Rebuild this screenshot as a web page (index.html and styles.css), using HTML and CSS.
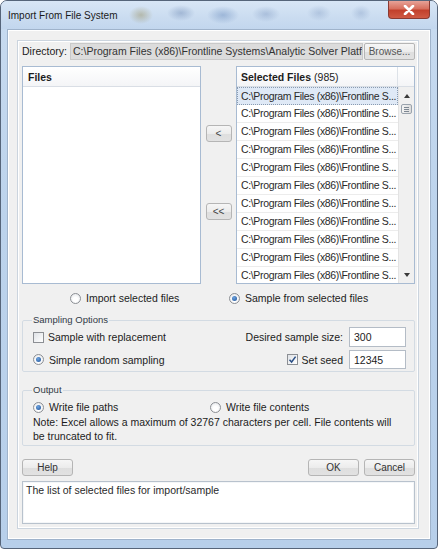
FILE: index.html
```html
<!DOCTYPE html>
<html>
<head>
<meta charset="utf-8">
<title>Import From File System</title>
<link rel="stylesheet" href="styles.css">
</head>
<body>
<div class="window">
  <div class="titlebar">
    <span class="title">Import From File System</span>
    <span class="close"><svg width="12" height="10" viewBox="0 0 12 10"><path d="M2 1 L10 9 M10 1 L2 9" stroke="#fff" stroke-width="2.6" stroke-linecap="round"/></svg></span>
  </div>
  <div class="client">
    <div class="panel">
      <div class="dir-row">
        <span class="dir-label">Directory:</span>
        <div class="dir-input"><span class="dir-text">C:\Program Files (x86)\Frontline Systems\Analytic Solver Platform</span></div>
        <div class="btn browse">Browse...</div>
      </div>

      <div class="lists">
        <div class="list files">
          <div class="list-head"><b>Files</b></div>
        </div>
        <div class="move-col">
          <div class="btn move move-one">&lt;</div>
          <div class="btn move move-all">&lt;&lt;</div>
        </div>
        <div class="list selected">
          <div class="list-head">
            <span class="head-cell"><b>Selected Files</b> (985)</span>
            <span class="head-corner"></span>
          </div>
          <div class="list-body">
            <div class="rows">
              <div class="row current">C:\Program Files (x86)\Frontline S...</div>
              <div class="row">C:\Program Files (x86)\Frontline S...</div>
              <div class="row">C:\Program Files (x86)\Frontline S...</div>
              <div class="row">C:\Program Files (x86)\Frontline S...</div>
              <div class="row">C:\Program Files (x86)\Frontline S...</div>
              <div class="row">C:\Program Files (x86)\Frontline S...</div>
              <div class="row">C:\Program Files (x86)\Frontline S...</div>
              <div class="row">C:\Program Files (x86)\Frontline S...</div>
              <div class="row">C:\Program Files (x86)\Frontline S...</div>
              <div class="row">C:\Program Files (x86)\Frontline S...</div>
              <div class="row">C:\Program Files (x86)\Frontline S...</div>
            </div>
            <div class="scrollbar">
              <span class="arrow"><span class="tri-up"></span></span>
              <span class="thumb"><span class="grip"></span></span>
              <span class="track"></span>
              <span class="arrow"><span class="tri-down"></span></span>
            </div>
          </div>
        </div>
      </div>

      <div class="mode-row">
        <span class="opt mode-first"><span class="radio"></span>Import selected files</span>
        <span class="opt"><span class="radio on"></span>Sample from selected files</span>
      </div>

      <fieldset class="group sampling">
        <legend>Sampling Options</legend>
        <div class="grow">
          <span class="opt"><span class="check"></span>Sample with replacement</span>
          <span class="right"><span class="lbl">Desired sample size:</span><span class="field">300</span></span>
        </div>
        <div class="grow">
          <span class="opt"><span class="radio on"></span>Simple random sampling</span>
          <span class="right"><span class="opt"><span class="check on"><svg width="9" height="9" viewBox="0 0 9 9"><path d="M1.5 4.8 L3.6 7 L7.6 1.6" fill="none" stroke="#2b4f86" stroke-width="1.5"/></svg></span>Set seed</span><span class="field">12345</span></span>
        </div>
      </fieldset>

      <fieldset class="group output">
        <legend>Output</legend>
        <div class="out-row">
          <span class="opt out-first"><span class="radio on"></span>Write file paths</span>
          <span class="opt"><span class="radio"></span>Write file contents</span>
        </div>
        <p class="note">Note: Excel allows a maximum of 32767 characters per cell. File contents will<br>be truncated to fit.</p>
      </fieldset>

      <div class="btn-row">
        <div class="btn act">Help</div>
        <span class="spacer"></span>
        <div class="btn act">OK</div>
        <div class="btn act">Cancel</div>
      </div>

      <div class="desc">The list of selected files for import/sample</div>
    </div>
  </div>
</div>
</body>
</html>
```

FILE: styles.css
```css
* { box-sizing: border-box; }

html, body {
  margin: 0;
  padding: 0;
  background: #ffffff;
}

body {
  font-family: "Liberation Sans", Arial, sans-serif;
  font-size: 10.5px;
  color: #1c1c1c;
}

.window {
  width: 438px;
  height: 549px;
  border: 1px solid #56657a;
  border-radius: 7px 7px 4px 4px;
  background: linear-gradient(180deg, #c8dbf0 0%, #bcd3ec 40%, #b7cfea 100%);
  padding: 0 6px 8px 6px;
  display: flex;
  flex-direction: column;
  overflow: hidden;
}

.titlebar {
  height: 28px;
  display: flex;
  align-items: flex-start;
  margin: 0 -6px;
  padding: 0 7px 0 7px;
  background:
    radial-gradient(ellipse 12px 9px at 140px 14px, rgba(150,140,90,0.45), transparent),
    radial-gradient(ellipse 14px 8px at 180px 12px, rgba(80,110,160,0.35), transparent),
    radial-gradient(ellipse 16px 9px at 222px 14px, rgba(70,110,170,0.35), transparent),
    radial-gradient(ellipse 14px 8px at 265px 13px, rgba(90,120,170,0.3), transparent),
    radial-gradient(ellipse 12px 8px at 318px 12px, rgba(90,120,170,0.25), transparent),
    radial-gradient(ellipse 10px 8px at 360px 12px, rgba(90,120,170,0.25), transparent),
    linear-gradient(180deg, #d8e6f6 0%, #cadcf0 60%, #c2d6ee 100%);
}

.title {
  font-size: 10px;
  color: #1a1a1a;
  padding-top: 9px;
  flex: 1;
}

.close {
  width: 42px;
  height: 18px;
  margin-top: 0;
  border: 1px solid #8a3a32;
  border-top: none;
  border-radius: 0 0 4px 4px;
  background: linear-gradient(180deg, #e7a298 0%, #d7705f 45%, #c2402c 55%, #cf5a44 100%);
  display: flex;
  align-items: center;
  justify-content: center;
}

.client {
  flex: 1;
  background: #f0f0f0;
  border: 1px solid #9fb3cb;
  box-shadow: inset 0 0 0 1px #ffffff;
  padding: 10px 11px 10px 9px;
  display: flex;
}

.panel {
  flex: 1;
  border: 1px solid #cbd4de;
  box-shadow: inset 0 0 0 1px #ffffff;
  padding: 2px 3px 2px 4px;
  display: flex;
  flex-direction: column;
}

/* Directory row */
.dir-row {
  height: 17px;
  display: flex;
  align-items: stretch;
}

.dir-label {
  width: 48px;
  line-height: 17px;
  white-space: nowrap;
}

.dir-input {
  width: 293px;
  background: #dcdcdc;
  border: 1px solid #c9c9c9;
  line-height: 15px;
  padding: 0 2px;
  white-space: nowrap;
  overflow: hidden;
  color: #333;
}

.btn {
  border: 1px solid #b5b5b5;
  border-radius: 3px;
  background: linear-gradient(180deg, #f6f6f6 0%, #ececec 50%, #dedede 51%, #e2e2e2 100%);
  color: #2a2a2a;
  display: flex;
  align-items: center;
  justify-content: center;
  font-size: 10px;
}

.browse {
  width: 51px;
  margin-left: 1px;
  border-radius: 2px;
  color: #555;
}

/* Lists */
.lists {
  margin-top: 6px;
  height: 218px;
  display: flex;
}

.list {
  width: 179px;
  border: 1px solid #a8bbd2;
  background: #ffffff;
  display: flex;
  flex-direction: column;
  overflow: hidden;
}

.list-head {
  height: 20px;
  border-bottom: 1px solid #d9dee5;
  background: linear-gradient(180deg, #ffffff, #f4f5f7);
  display: flex;
  align-items: center;
  flex-shrink: 0;
}

.files .list-head {
  padding-left: 5px;
}

.head-cell {
  flex: 1;
  padding-left: 4px;
  height: 100%;
  display: flex;
  align-items: center;
  gap: 3px;
}

.head-corner {
  width: 17px;
  height: 100%;
  border-left: 1px solid #dde2e8;
}

.move-col {
  width: 35px;
  display: flex;
  flex-direction: column;
  align-items: center;
}

.move {
  width: 26px;
  height: 17px;
  color: #444;
  font-size: 10px;
}

.move-one { margin-top: 59px; }
.move-all { margin-top: 61px; }

.list-body {
  flex: 1;
  display: flex;
  min-height: 0;
}

.rows {
  flex: 1;
  overflow: hidden;
}

.row {
  height: 18px;
  line-height: 17px;
  border-bottom: 1px solid #ececec;
  padding-left: 4px;
  white-space: nowrap;
  overflow: hidden;
  color: #2a2a2a;
  letter-spacing: -0.35px;
}

.row.current {
  background: #dfe9f6;
  border: 1px dotted #8a9bb0;
  padding-left: 3px;
  line-height: 16px;
}

.scrollbar {
  width: 16px;
  background: #f0f0f0;
  border-left: 1px solid #e3e3e3;
  display: flex;
  flex-direction: column;
  align-items: center;
}

.arrow {
  height: 17px;
  width: 100%;
  display: flex;
  align-items: center;
  justify-content: center;
}

.tri-up {
  width: 0; height: 0;
  border-left: 3.5px solid transparent;
  border-right: 3.5px solid transparent;
  border-bottom: 4px solid #3a3a3a;
}

.tri-down {
  width: 0; height: 0;
  border-left: 3.5px solid transparent;
  border-right: 3.5px solid transparent;
  border-top: 4px solid #3a3a3a;
}

.thumb {
  width: 11px;
  height: 10px;
  border: 1px solid #9aa3ad;
  border-radius: 2px;
  background: linear-gradient(90deg, #f4f4f4, #dcdcdc);
  display: flex;
  align-items: center;
  justify-content: center;
}

.grip {
  width: 5px;
  height: 5px;
  border-top: 1px solid #7d8792;
  border-bottom: 1px solid #7d8792;
  background: linear-gradient(180deg, transparent 40%, #7d8792 40%, #7d8792 60%, transparent 60%);
}

.track { flex: 1; }

/* Options */
.opt {
  display: inline-flex;
  align-items: center;
  white-space: nowrap;
}

.radio {
  width: 11px;
  height: 11px;
  border-radius: 50%;
  border: 1px solid #8c8f94;
  background: radial-gradient(circle at 50% 60%, #ffffff 30%, #dfe2e6 100%);
  margin-right: 5px;
  flex-shrink: 0;
  display: inline-flex;
  align-items: center;
  justify-content: center;
}

.radio.on::after {
  content: "";
  width: 5px;
  height: 5px;
  border-radius: 50%;
  background: radial-gradient(circle at 40% 35%, #6da4e0, #1c4f95);
}

.check {
  width: 11px;
  height: 11px;
  border: 1px solid #8c8f94;
  background: linear-gradient(135deg, #dfe2e6, #ffffff);
  margin-right: 4px;
  flex-shrink: 0;
  display: inline-flex;
  align-items: center;
  justify-content: center;
}

.mode-row {
  margin-top: 6px;
  height: 16px;
  display: flex;
  align-items: center;
  padding-left: 48px;
}

.mode-first {
  width: 159px;
}

.group {
  margin: 0;
  border: 1px solid #d3dbe3;
  border-radius: 2px;
  min-width: 0;
}

.group legend {
  font-size: 9.5px;
  line-height: 12px;
  padding: 0 1px;
  margin-left: -1px;
  color: #303a46;
}

.sampling {
  margin-top: 8px;
  padding: 1px 8px 2px 10px;
}

.grow {
  display: flex;
  align-items: center;
  justify-content: space-between;
}

.grow + .grow {
  margin-top: 3px;
}

.grow:first-of-type {
  height: 20px;
}

.grow:last-of-type {
  height: 19px;
}

.right {
  display: flex;
  align-items: center;
  height: 100%;
}

.lbl {
  margin-right: 6px;
}

.right .opt {
  margin-right: 6px;
}

.field {
  width: 57px;
  height: 100%;
  background: #ffffff;
  border: 1px solid #b4bcc6;
  padding-left: 4px;
  display: flex;
  align-items: center;
}

.output {
  margin-top: 12px;
  padding: 3px 8px 2px 10px;
}

.out-row {
  height: 16px;
  display: flex;
  align-items: center;
}

.out-first {
  width: 177px;
}

.note {
  margin: 1px 0 0 0;
  line-height: 13.5px;
}

.btn-row {
  margin-top: 13px;
  height: 17px;
  display: flex;
}

.act {
  width: 51px;
  color: #333;
}

.spacer { flex: 1; }

.btn-row .act + .act { margin-left: 5px; }

.desc {
  margin-top: 5px;
  height: 43px;
  background: #ffffff;
  border: 1px solid #b8c2cd;
  box-shadow: inset 0 0 0 1px #f4f6f8;
  padding: 2px 3px;
  color: #2a2a2a;
}
```
